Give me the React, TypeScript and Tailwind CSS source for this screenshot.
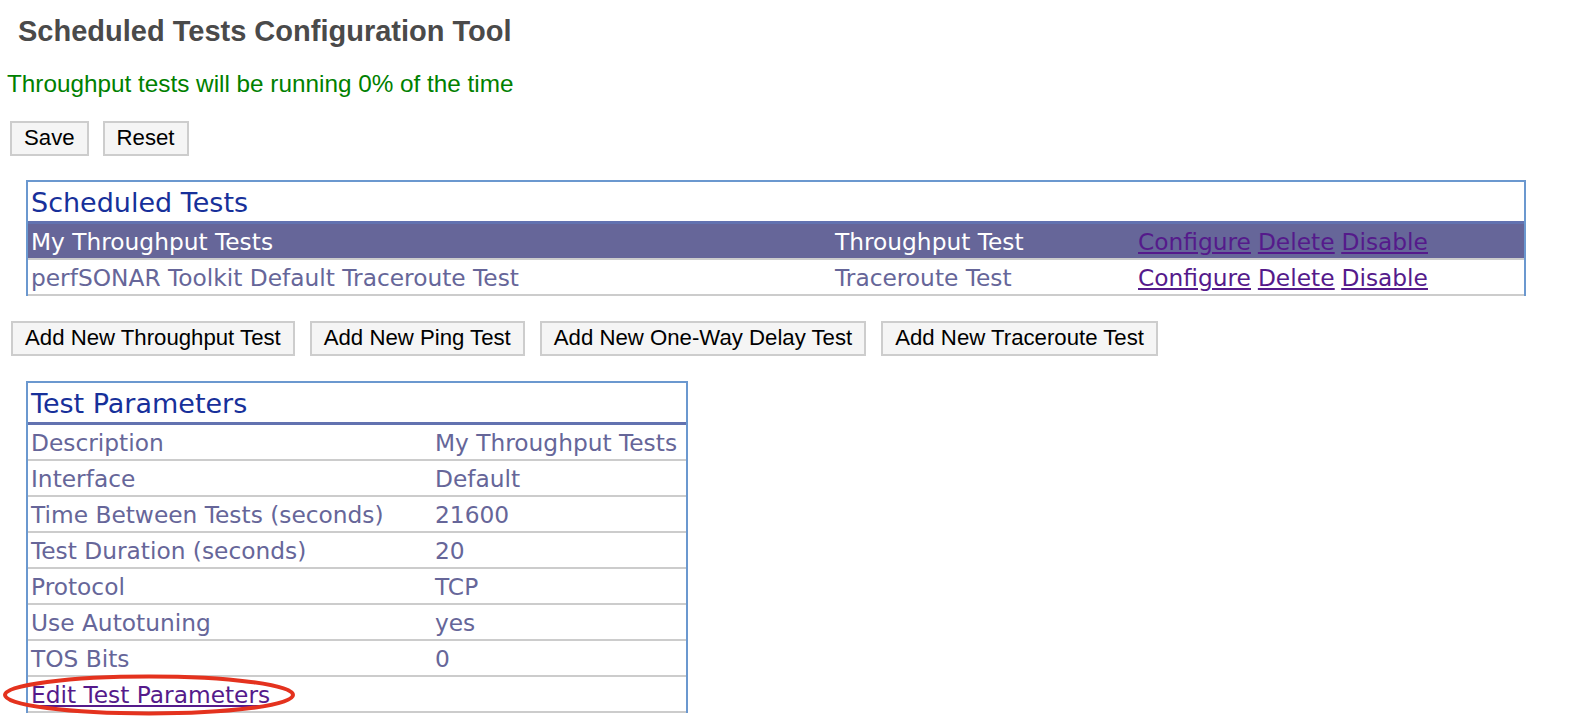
const scheduled = [
  { name: "My Throughput Tests", type: "Throughput Test", selected: true },
  { name: "perfSONAR Toolkit Default Traceroute Test", type: "Traceroute Test", selected: false },
];

const params: [string, string][] = [
  ["Description", "My Throughput Tests"],
  ["Interface", "Default"],
  ["Time Between Tests (seconds)", "21600"],
  ["Test Duration (seconds)", "20"],
  ["Protocol", "TCP"],
  ["Use Autotuning", "yes"],
  ["TOS Bits", "0"],
];

const addButtons = [
  "Add New Throughput Test",
  "Add New Ping Test",
  "Add New One-Way Delay Test",
  "Add New Traceroute Test",
];

function Btn({ label }: { label: string }) {
  return (
    <button className="h-[35px] border-2 border-[#cdcdcd] bg-[#f5f5f5] px-[12px] text-[22.2px] leading-none text-black">
      {label}
    </button>
  );
}

function Links() {
  return (
    <span className="flex gap-[7px] text-[#551a8b] underline">
      <a href="#">Configure</a>
      <a href="#">Delete</a>
      <a href="#">Disable</a>
    </span>
  );
}

export default function App() {
  return (
    <div className="h-[720px] w-[1586px] overflow-hidden bg-white font-['Liberation_Sans',Arial,sans-serif]">
      <h1 className="h-[60px] pl-[18px] text-[29px] font-bold leading-[62px] text-[#4a4a4a]">
        Scheduled Tests Configuration Tool
      </h1>
      <p className="h-[48px] pl-[7px] text-[24.3px] leading-[48px] text-[#008000]">
        Throughput tests will be running 0% of the time
      </p>

      <div className="mt-[13px] flex gap-[14px] pl-[10px]">
        <Btn label="Save" />
        <Btn label="Reset" />
      </div>

      <div className="font-['DejaVu_Sans',sans-serif] text-[23.3px] text-[#666699]">
        <div className="ml-[26px] mt-[24px] w-[1500px] border-x-2 border-t-2 border-[#6b98cf]">
          <div className="h-[42px] border-b-[3px] border-[#6272b0] pl-[3px] text-[27px] leading-[41px] text-[#17309a]">
            Scheduled Tests
          </div>
          {scheduled.map((row) => (
            <div
              key={row.name}
              className={`grid h-[36px] grid-cols-[804px_303px_1fr] border-b-2 border-[#cccccc] leading-[35px] ${
                row.selected ? "bg-[#666699] text-white" : "bg-white"
              }`}
            >
              <span className="pl-[3px]">{row.name}</span>
              <span className="pl-[3px]">{row.type}</span>
              <span className="pl-[3px]">
                <Links />
              </span>
            </div>
          ))}
        </div>

        <div className="mt-[25px] flex gap-[15px] pl-[11px] font-['Liberation_Sans',Arial,sans-serif]">
          {addButtons.map((b) => (
            <Btn key={b} label={b} />
          ))}
        </div>

        <div className="ml-[26px] mt-[25px] w-[662px] border-x-2 border-t-2 border-[#6b98cf]">
          <div className="h-[42px] border-b-[3px] border-[#6272b0] pl-[3px] text-[27px] leading-[41px] text-[#17309a]">
            Test Parameters
          </div>
          {params.map(([k, v]) => (
            <div key={k} className="grid h-[36px] grid-cols-[404px_1fr] border-b-2 border-[#cccccc] leading-[35px]">
              <span className="pl-[3px]">{k}</span>
              <span className="pl-[3px]">{v}</span>
            </div>
          ))}
          <div className="relative h-[36px] border-b-2 border-[#cccccc] pl-[3px] leading-[35px]">
            <a href="#" className="text-[#551a8b] underline">
              Edit Test Parameters
            </a>
            <svg
              className="pointer-events-none absolute left-[-26px] top-[-3px]"
              width="294"
              height="42"
              viewBox="0 0 294 42"
            >
              <ellipse cx="147" cy="21" rx="144" ry="18.5" fill="none" stroke="#e4321e" strokeWidth="4" />
            </svg>
          </div>
        </div>
      </div>
    </div>
  );
}
